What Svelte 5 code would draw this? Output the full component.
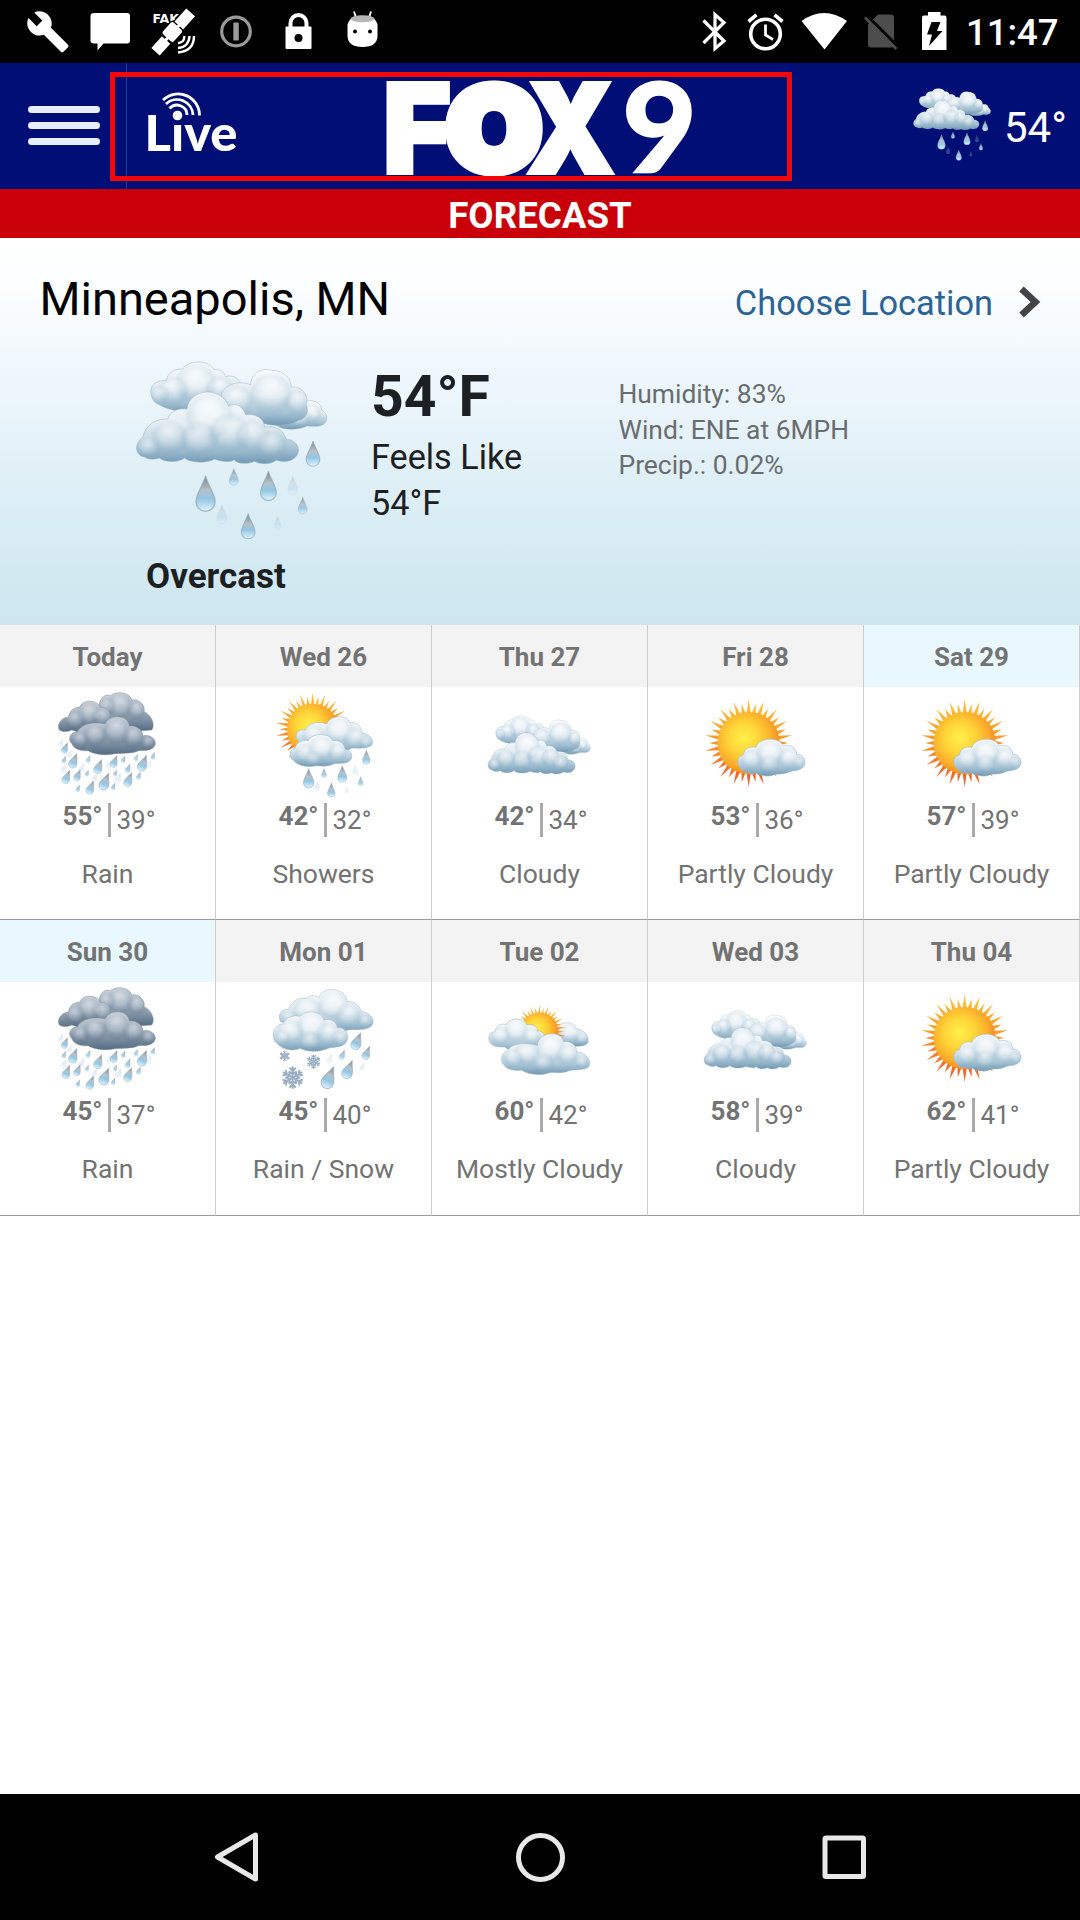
<script>
  const days = [
    { name: 'Today', icon: 'rain', high: 55, low: 39, text: 'Rain' },
    { name: 'Wed 26', icon: 'showers', high: 42, low: 32, text: 'Showers' },
    { name: 'Thu 27', icon: 'cloudy', high: 42, low: 34, text: 'Cloudy' },
    { name: 'Fri 28', icon: 'partly', high: 53, low: 36, text: 'Partly Cloudy' },
    { name: 'Sat 29', icon: 'partly', high: 57, low: 39, text: 'Partly Cloudy', weekend: true },
    { name: 'Sun 30', icon: 'rain', high: 45, low: 37, text: 'Rain', weekend: true },
    { name: 'Mon 01', icon: 'snow', high: 45, low: 40, text: 'Rain / Snow' },
    { name: 'Tue 02', icon: 'mostly', high: 60, low: 42, text: 'Mostly Cloudy' },
    { name: 'Wed 03', icon: 'cloudy', high: 58, low: 39, text: 'Cloudy' },
    { name: 'Thu 04', icon: 'partly', high: 62, low: 41, text: 'Partly Cloudy' }
  ];

  const boxes = {
    rain: '162 207 324 324',
    showers: '810 207 324 324',
    cloudy: '168 207 324 324',
    partly: '818 207 324 324',
    snow: '810 207 324 324',
    mostly: '168 207 324 324'
  };

  // Spiky ring of rays round a sun disc; long and short rays alternate.
  function rays(cx, cy, r, outer, n = 36) {
    let d = '';
    const step = (Math.PI * 2) / n;
    for (let i = 0; i < n; i++) {
      const a = i * step - Math.PI / 2;
      const len = i % 2 ? r + (outer - r) * 0.66 : outer;
      const p = (ang, rad) => `${(cx + Math.cos(ang) * rad).toFixed(1)},${(cy + Math.sin(ang) * rad).toFixed(1)}`;
      d += `M${p(a - step * 0.42, r - 4)}L${p(a, len)}L${p(a + step * 0.42, r - 4)}Z`;
    }
    return d;
  }

  // [x, y, height, opacity]
  const overcastDrops = [
    [258, 432, 106, 1], [343, 382, 50, 0.9], [447, 409, 88, 1], [581, 312, 76, 1],
    [386, 530, 76, 1], [550, 468, 50, 0.9], [520, 407, 54, 0.28], [307, 494, 56, 0.28], [475, 519, 36, 0.28]
  ];
  const showerDrops = [
    [926, 475, 58, 1], [972, 459, 28, 0.9], [1027, 462, 50, 1], [1099, 412, 42, 1],
    [994, 510, 42, 1], [1082, 484, 28, 0.9], [1066, 451, 30, 0.25], [952, 498, 30, 0.25], [1041, 511, 20, 0.25]
  ];
  const rainDrops = [
    [196, 384, 34, 1], [222, 422, 46, 1], [193, 419, 22, 0.9], [266, 417, 24, 0.8], [297, 439, 44, 1],
    [344, 424, 38, 1], [371, 418, 22, 0.9], [409, 413, 22, 0.8], [430, 429, 50, 1], [460, 408, 22, 0.9],
    [201, 470, 42, 1], [234, 465, 36, 1], [262, 459, 20, 0.9], [316, 484, 54, 1], [347, 459, 20, 0.9],
    [385, 445, 28, 0.9], [387, 478, 44, 1], [417, 467, 24, 0.9], [235, 505, 22, 0.9], [273, 502, 42, 1],
    [341, 499, 22, 0.9], [184, 368, 26, 0.25], [193, 445, 30, 0.25], [246, 443, 30, 0.25],
    [356, 474, 34, 0.25], [327, 434, 26, 0.25], [448, 432, 28, 0.2], [210, 402, 26, 0.25], [285, 472, 28, 0.25]
  ];
  const snowDrops = [
    [1072, 378, 54, 1], [1101, 413, 42, 1], [1028, 419, 30, 0.9], [1046, 463, 58, 1], [988, 487, 70, 1],
    [990, 431, 30, 0.25], [1088, 455, 26, 0.25]
  ];
</script>

{#snippet cloud(id, d, puffs, dark = false)}
  <clipPath {id}><path {d} /></clipPath>
  <path {d} fill={dark ? 'url(#g-dark)' : 'url(#g-cloud)'} />
  <g clip-path="url(#{id})">
    <g class="soft">
      {#each puffs as [x, y, r]}
        <circle cx={x} cy={y + r * 0.2} r={r * 1.1} fill={dark ? 'url(#g-shade-dark)' : 'url(#g-shade)'} />
        <circle cx={x - r * 0.05} cy={y - r * 0.2} r={r} fill={dark ? 'url(#g-puff-dark)' : 'url(#g-puff)'} />
      {/each}
    </g>
  </g>
  <path {d} fill="none" stroke={dark ? '#7c8d9e' : '#9bb3c5'} stroke-width="3" stroke-opacity=".5" />
{/snippet}

{#snippet drops(list, angle = 0)}
  {#each list as [x, y, h, o]}
    <path
      d="M0,-50 C5,-27 27,0 27,23 A27,27 0 0 1 -27,23 C-27,0 -5,-27 0,-50Z"
      transform="translate({x} {y}) rotate({angle}) scale({h / 100})"
      fill="url(#g-drop)" stroke="#8fa6b7" stroke-opacity=".7" stroke-width="4" opacity={o}
    />
  {/each}
{/snippet}

{#snippet sun(x, y, r, outer)}
  <path d={rays(x, y, r, outer)} fill="url(#g-ray)" />
  <circle cx={x} cy={y} r={r} fill="url(#g-sun)" />
{/snippet}

{#snippet flake(x, y, s)}
  <g transform="translate({x} {y}) scale({s})" stroke="#9aaec3" stroke-width="6" stroke-linecap="round" fill="none">
    {#each [0, 60, 120, 180, 240, 300] as a}
      <path d="M0,0V-31M-8,-28L0,-20L8,-28M-9,-17L0,-10L9,-17" transform="rotate({a})" />
    {/each}
  </g>
{/snippet}

<svg class="sprite" aria-hidden="true">
  <defs>
    <linearGradient id="g-cloud" x1="0" y1="0" x2="0" y2="1">
      <stop offset="0" stop-color="#fdfeff" /><stop offset=".45" stop-color="#e4edf3" />
      <stop offset=".75" stop-color="#adc8d8" /><stop offset="1" stop-color="#7098b3" />
    </linearGradient>
    <linearGradient id="g-dark" x1="0" y1="0" x2="0" y2="1">
      <stop offset="0" stop-color="#d0d6df" /><stop offset=".5" stop-color="#9dacbc" />
      <stop offset="1" stop-color="#526a80" />
    </linearGradient>
    <radialGradient id="g-puff">
      <stop offset="0" stop-color="#fff" stop-opacity=".55" /><stop offset=".5" stop-color="#fff" stop-opacity=".26" />
      <stop offset="1" stop-color="#fff" stop-opacity="0" />
    </radialGradient>
    <radialGradient id="g-puff-dark">
      <stop offset="0" stop-color="#edf0f5" stop-opacity=".5" /><stop offset="1" stop-color="#d8e0ea" stop-opacity="0" />
    </radialGradient>
    <radialGradient id="g-shade">
      <stop offset=".4" stop-color="#86adc4" stop-opacity="0" /><stop offset=".82" stop-color="#86adc4" stop-opacity=".22" />
      <stop offset="1" stop-color="#86adc4" stop-opacity="0" />
    </radialGradient>
    <radialGradient id="g-shade-dark">
      <stop offset=".4" stop-color="#4f667b" stop-opacity="0" /><stop offset=".82" stop-color="#4f667b" stop-opacity=".2" />
      <stop offset="1" stop-color="#4f667b" stop-opacity="0" />
    </radialGradient>
    <linearGradient id="g-drop" x1="0" y1="0" x2="0" y2="1">
      <stop offset="0" stop-color="#7f8489" /><stop offset=".4" stop-color="#b6c1c9" />
      <stop offset=".65" stop-color="#93c6e4" /><stop offset="1" stop-color="#e2f5fd" />
    </linearGradient>
    <radialGradient id="g-sun" cx=".42" cy=".42" r=".62">
      <stop offset="0" stop-color="#fff04c" /><stop offset=".4" stop-color="#fed538" />
      <stop offset=".75" stop-color="#fbab2b" /><stop offset="1" stop-color="#f28421" />
    </radialGradient>
    <linearGradient id="g-ray" x1="0" y1="0" x2="0" y2="1">
      <stop offset="0" stop-color="#fbc83c" /><stop offset=".5" stop-color="#f7942a" /><stop offset="1" stop-color="#ee5a28" />
    </linearGradient>

    <g id="clouds">
      {@render cloud('c1', 'M120,165 C92,158 82,110 110,98 C125,90 140,92 140,92 C145,65 170,55 190,58 C205,30 265,28 284,60 C300,55 315,70 318,80 C340,75 355,85 362,97 L330,190 L250,192 C220,195 180,190 160,180 C145,178 130,172 120,165Z', [[230, 90, 60], [160, 115, 45], [118, 130, 30], [300, 110, 40]])}
      {@render cloud('c2', 'M555,155 C590,146 608,165 606,180 C626,190 628,215 610,225 C590,235 570,226 560,230 C540,240 500,242 480,232 L430,200 L500,150Z', [[575, 185, 30], [540, 200, 35]])}
      {@render cloud('c3', 'M306,130 C320,100 365,92 393,105 C398,60 435,55 460,62 C495,62 517,90 515,112 C550,108 570,140 560,165 C572,190 555,210 535,212 C510,232 440,230 420,215 L300,200Z', [[455, 120, 62], [350, 145, 50], [535, 150, 38]])}
      {@render cloud('c4', 'M75,322 C45,318 42,280 70,262 C75,225 115,205 145,208 C150,180 185,175 202,178 C210,115 305,108 328,170 C350,155 375,175 378,195 C405,190 435,205 435,232 C470,225 495,245 500,268 C535,270 550,305 525,325 C510,340 480,335 470,332 C455,345 420,345 405,335 C385,345 350,342 345,330 C330,340 300,335 285,328 C265,342 210,340 195,325 C180,338 135,340 120,325 C105,330 85,330 75,322Z', [[270, 185, 70], [150, 255, 52], [240, 260, 55], [330, 240, 60], [400, 250, 50], [85, 290, 36], [455, 280, 46]])}
    </g>

    <g id="overcast">
      <use href="#clouds" />
      {@render drops(overcastDrops)}
    </g>

    <g id="cloudy"><use href="#clouds" transform="translate(147 266) scale(.537 .573)" /></g>

    <g id="rain">
      {@render cloud('r1', 'M298,250 C305,225 325,222 330,228 C345,212 390,215 395,240 C420,235 437,260 432,275 C455,285 467,315 455,330 L400,334 L300,290Z', [[360, 250, 38], [410, 265, 28], [320, 255, 26]], true)}
      {@render cloud('r2', 'M178,330 C168,310 190,290 205,292 C210,268 225,262 238,262 C250,235 295,240 300,262 C325,260 335,280 330,295 L300,335 C270,345 230,335 215,330 C200,337 185,335 178,330Z', [[268, 275, 36], [225, 295, 30], [305, 285, 28]], true)}
      {@render cloud('r3', 'M215,370 C200,355 215,335 232,335 C245,308 290,305 315,312 C330,280 385,285 388,318 C415,315 430,335 428,348 C455,340 475,365 462,380 C450,395 425,390 415,392 C395,403 350,398 340,402 C310,408 275,400 265,392 C240,395 220,385 215,370Z', [[350, 325, 40], [285, 340, 34], [400, 345, 32], [240, 355, 26], [445, 365, 22]], true)}
      {@render drops(rainDrops, 22)}
    </g>

    <g id="showers">
      {@render sun(938, 328, 77, 111)}
      {@render cloud('s1', 'M893,362 C880,345 895,325 915,330 C925,308 955,302 980,312 C990,285 1040,282 1050,308 C1070,305 1085,320 1086,340 C1105,338 1125,360 1115,376 C1100,388 1070,384 1055,384 L1030,400 L900,375Z', [[1018, 325, 42], [940, 340, 32], [1065, 350, 34], [1098, 365, 20]])}
      {@render cloud('s2', 'M880,420 C865,412 868,385 885,385 C890,365 910,358 925,362 C935,338 990,338 998,362 C1022,358 1035,375 1035,388 C1055,388 1062,412 1048,424 C1030,434 1010,428 1000,432 C980,443 960,436 945,438 C915,443 890,435 880,420Z', [[965, 378, 38], [915, 398, 30], [1012, 392, 28], [940, 415, 26]])}
      {@render drops(showerDrops)}
    </g>

    <g id="partly">
      {@render sun(958, 369, 93, 132)}
      {@render cloud('p1', 'M935,446 C920,435 922,408 942,405 C945,385 962,378 980,382 C990,350 1052,350 1062,378 C1085,370 1102,385 1102,402 C1125,402 1135,430 1120,443 C1105,455 1085,450 1075,458 C1055,464 1045,460 1035,464 C1015,472 990,466 980,460 C960,462 940,456 935,446Z', [[1022, 392, 40], [965, 415, 32], [1080, 410, 34], [1020, 430, 30], [1108, 425, 18]])}
    </g>

    <g id="mostly">
      {@render cloud('m1', 'M385,335 C400,318 430,318 440,342 C460,342 475,360 475,380 C470,395 440,395 420,392 L380,380Z', [[420, 350, 30], [455, 368, 20]])}
      {@render sun(328, 350, 57, 80)}
      {@render cloud('m2', 'M185,388 C170,375 175,350 195,350 C198,330 215,325 228,328 C240,305 285,308 290,330 C315,325 325,340 322,348 C340,345 348,365 345,385 L300,412 C260,408 235,408 225,396 C210,396 192,396 185,388Z', [[258, 338, 34], [212, 358, 28], [305, 358, 26]])}
      {@render cloud('m3', 'M222,450 C208,438 215,410 232,408 C240,385 290,380 322,392 C325,348 395,345 400,380 C425,375 442,395 440,412 C465,408 490,440 475,456 C460,468 430,462 415,468 C390,478 370,470 355,474 C325,484 290,476 275,466 C250,468 228,462 222,450Z', [[362, 392, 42], [290, 410, 36], [412, 412, 32], [250, 425, 28], [340, 440, 30], [455, 438, 20]])}
    </g>

    <g id="snow">
      {@render cloud('w1', 'M842,320 C832,300 842,283 866,283 C875,258 900,245 920,250 C930,240 945,240 957,248 C968,212 1035,215 1042,260 C1065,258 1082,275 1082,290 C1105,288 1130,315 1115,332 C1100,348 1060,342 1045,345 L990,355Z', [[1000, 260, 44], [920, 280, 42], [1045, 295, 38], [865, 305, 24], [1095, 315, 22]])}
      {@render cloud('w2', 'M832,386 C812,372 815,330 850,326 C855,305 885,300 900,304 C918,282 965,288 972,315 C995,308 1012,325 1012,338 C1040,335 1052,370 1035,386 C1020,400 990,394 980,402 C950,413 920,410 900,400 C875,412 845,400 832,386Z', [[935, 325, 44], [870, 345, 40], [985, 350, 36], [930, 375, 32], [1020, 365, 24], [845, 365, 26]])}
      {@render flake(878, 488, 1)}
      {@render flake(941, 440, 0.64)}
      {@render flake(854, 423, 0.48)}
      {@render drops(snowDrops, 22)}
    </g>
  </defs>
</svg>

<div class="screen">
  <div class="status">
    <svg class="s48" viewBox="23 0 48 63"><path transform="translate(25.5 9.3) scale(1.87)" fill="#fff" d="M22.7 19l-9.1-9.1c.9-2.3.4-5-1.5-6.9-2-2-5-2.4-7.4-1.3L9 6 6 9 1.6 4.7C.4 7.1.9 10.1 2.9 12.1c1.9 1.9 4.6 2.4 6.9 1.5l9.1 9.1c.4.4 1 .4 1.4 0l2.3-2.3c.5-.4.5-1.1.1-1.4z" /></svg>
    <svg class="s48" viewBox="86 0 48 63"><path fill="#fff" d="M94,13h33q3,0 3,3v24.500q0,3 -3,3h-23.500l-6,7v-7h-3.500q-3.500,0 -3.500,-3v-24.500q0,-3 3.500,-3z" /></svg>
    <svg class="s48" viewBox="149 0 48 63">
      <text x="152.500" y="22.500" class="fake">FAKE</text>
      <g transform="translate(173 32) rotate(-48)" fill="#fff" stroke="#000" stroke-width="1.200">
        <rect x="-27" y="-6" width="17" height="12.500" /><rect x="8" y="-6.500" width="19" height="13" />
        <rect x="-9" y="-8.500" width="17" height="16" rx="3" /><path d="M-11,0h3M7,0h3" stroke="#fff" stroke-width="3" />
      </g>
      <g fill="none" stroke="#fff" stroke-width="2.400"><path d="M178,43Q184,43 184.500,36" /><path d="M178,48Q189,47 189.500,36" /><path d="M178,52.500Q194,51 194,36" /></g>
    </svg>
    <svg class="s48" viewBox="212 0 48 63"><circle cx="236" cy="31.500" r="14.300" fill="none" stroke="#9a9a9a" stroke-width="3.200" /><rect x="233.300" y="22.500" width="5.500" height="18" rx="1" fill="#9a9a9a" /></svg>
    <svg class="s48" viewBox="275 0 48 63"><path d="M290.500,28v-5a8,8 0 0 1 16,0v5" fill="none" stroke="#fff" stroke-width="4" /><rect x="285.500" y="26.500" width="26" height="22.500" rx="1" fill="#fff" /><circle cx="298.500" cy="38" r="4" fill="#000" /></svg>
    <svg class="s48" viewBox="338 0 48 63"><path d="M356,18l-2,-6.500M369,18l2,-6.500" stroke="#fff" stroke-width="1.800" /><path fill="#fff" d="M347.500,25q1,-5 5,-7.500h20q4,2.500 5,7.500v11q-.5,11 -15,11t-15,-11z" /><ellipse cx="362.500" cy="18.800" rx="12" ry="3.500" fill="#b5b5b5" /><circle cx="355" cy="31.500" r="2" /><circle cx="370" cy="31.500" r="2" /></svg>
    <div class="grow"></div>
    <svg class="s48" viewBox="690 0 48 63"><path d="M703.500,20.500L724,41 715,48.500V14.500L724,22.500 703.500,43" fill="none" stroke="#fff" stroke-width="3.200" /></svg>
    <svg class="s56" viewBox="738 0 56 63"><g fill="none" stroke="#fff" stroke-width="3.600"><circle cx="765.500" cy="34" r="14.800" /><path d="M748.500,21.500l8,-6.700M782.500,21.500l-8,-6.700" /><path d="M765.500,24.500v10.500l7.500,4.500" stroke-width="2.800" /></g></svg>
    <svg class="s60" viewBox="794 0 60 63"><path fill="#fff" d="M801.500,21Q824,5 847,21L824.500,49.500Z" /></svg>
    <svg class="s54" viewBox="854 0 54 63"><path d="M878,14.500h13q3,0 3,3v27q0,3 -3,3h-20q-3,0 -3,-3v-20z" fill="#4d4d4d" /><path d="M867,17L898,48" stroke="#000" stroke-width="5" /><path d="M865,17.500L896.500,49" stroke="#4d4d4d" stroke-width="2.800" /></svg>
    <svg class="s52" viewBox="908 0 52 63"><path fill="#fff" d="M928,12h12.500v3.500h4q2,0 2,2v32.500h-24.500v-32.500q0,-2 2,-2h4z" /><path d="M931.500,22h9l-3.500,9h5.500l-13.500,15 3,-11.500h-5z" fill="#000" /></svg>
    <span class="clock">11:47</span>
  </div>

  <header class="bar">
    <div class="menu"><i></i><i></i><i></i></div>
    <svg class="live" viewBox="127 63 200 126">
      <g fill="none" stroke="#fff" stroke-linecap="butt">
        <path d="M169.500,108.500A10,10 0 0 1 187,115" stroke-width="2.800" />
        <path d="M166,104A16,16 0 0 1 193,115" stroke-width="2.800" />
        <path d="M163,100A21.500,21.500 0 0 1 199.500,115.500" stroke-width="2.800" />
      </g>
      <circle cx="177.500" cy="115.500" r="4.800" fill="#fff" />
      <text x="144.500" y="151" class="livetext" textLength="93" lengthAdjust="spacingAndGlyphs">Lıve</text>
    </svg>
    <svg class="logo" viewBox="380 63 330 126">
      <text y="172.500" class="fox"><tspan x="383" textLength="68" lengthAdjust="spacingAndGlyphs">F</tspan><tspan x="447" y="170" class="o" textLength="94" lengthAdjust="spacingAndGlyphs">O</tspan><tspan x="526.500" y="172.500" textLength="88" lengthAdjust="spacingAndGlyphs">X</tspan></text>
      <text x="622" y="173" class="nine" textLength="75" lengthAdjust="spacingAndGlyphs">9</text>
    </svg>
    <div class="grow"></div>
    <svg class="mini" viewBox="40 25 592 555"><use href="#overcast" /></svg>
    <span class="now">54°</span>
    <div class="highlight"></div>
  </header>

  <div class="banner">FORECAST</div>

  <section class="current">
    <div class="place">
      <span class="city">Minneapolis, MN</span>
      <span class="choose">Choose Location</span>
      <svg class="chevron" viewBox="0 0 22 32"><path d="M2.500,3L16.500,16 2.500,29" fill="none" stroke="#444" stroke-width="6.500" /></svg>
    </div>
    <div class="conditions">
      <div class="sky">
        <svg class="big" viewBox="40 25 592 555"><use href="#overcast" /></svg>
        <div class="summary">Overcast</div>
      </div>
      <div class="temp">
        <div class="deg">54°F</div>
        <div class="feels">Feels Like<br />54°F</div>
      </div>
      <div class="facts">Humidity: 83%<br />Wind: ENE at 6MPH<br />Precip.: 0.02%</div>
    </div>
  </section>

  <section class="days">
    {#each days as day}
      <article>
        <h3 class:weekend={day.weekend}>{day.name}</h3>
        <svg class="icon" viewBox={boxes[day.icon]}><use href="#{day.icon}" /></svg>
        <div class="range"><b>{day.high}°</b><i></i><span>{day.low}°</span></div>
        <p>{day.text}</p>
      </article>
    {/each}
  </section>

  <div class="grow"></div>

  <nav>
    <svg viewBox="0 0 60 60"><path d="M49.500,8V52L11.500,30Z" /></svg>
    <svg viewBox="0 0 60 60"><circle cx="30.500" cy="30.500" r="22" /></svg>
    <svg viewBox="0 0 60 60"><rect x="11" y="11" width="38.500" height="38.500" rx="1" /></svg>
  </nav>
</div>

<style>
  :global(body) { margin: 0; background: #fff; }
  .sprite { position: absolute; width: 0; height: 0; }
  .soft { filter: blur(3px); }
  .screen { width: 1080px; height: 1920px; display: flex; flex-direction: column; overflow: hidden; background: #fff; font-family: Roboto, sans-serif; }
  .screen svg { display: block; flex: none; }
  .grow { flex: 1; }

  .status { height: 63px; background: #000; display: flex; padding-left: 23px; box-sizing: border-box; flex: none; }
  .s48 { width: 48px; height: 63px; margin-right: 15px; }
  .grow ~ .s48 { margin-right: 0; }
  .s56 { width: 56px; height: 63px; }
  .s60 { width: 60px; height: 63px; }
  .s54 { width: 54px; height: 63px; }
  .s52 { width: 52px; height: 63px; }
  .clock { width: 120px; padding-left: 6px; box-sizing: border-box; color: #fff; font-size: 36.500px; font-weight: 500; line-height: 66px; }
  .fake { font: bold 12.500px 'DejaVu Sans', sans-serif; fill: #fff; }

  .bar { position: relative; height: 126px; flex: none; background: #000e75; display: flex; align-items: center; }
  .menu { width: 127px; height: 126px; border-right: 1px solid #2c3a8c; padding: 43px 26px 0 27.500px; box-sizing: border-box; display: flex; flex-direction: column; gap: 9px; }
  .menu i { height: 7px; border-radius: 4px; background: #e8eefc; }
  .live { width: 200px; height: 126px; }
  .livetext { font: 900 50px Lato, sans-serif; fill: #fff; }
  .logo { width: 330px; height: 126px; margin-left: 53px; overflow: visible; }
  .fox { font: 900 124px Inter, sans-serif; fill: #fff; stroke: #fff; stroke-width: 4px; }
  .o { font-size: 114px; stroke-width: 11px; }
  .nine { font: 900 123px Lato, sans-serif; fill: #fff; stroke: #fff; stroke-width: 1.500px; }
  .mini { width: 80px; height: 75px; margin: -3px 0 0; }
  .now { width: 76px; margin-left: 12px; color: #fff; font-size: 42px; line-height: 60px; padding-top: 4px; }
  .highlight { position: absolute; left: 110px; top: 9px; width: 682px; height: 109px; box-sizing: border-box; border: 5px solid #f60606; }

  .banner { height: 49px; flex: none; background: #c90009; color: #fff; text-align: center; font-size: 36.700px; font-weight: 700; line-height: 54px; }

  .current { height: 387px; flex: none; box-sizing: border-box; padding-top: 30px; background: linear-gradient(#fff 0, #fdfeff 10%, #edf6fc 38%, #d8ecf4 75%, #cde6f0 100%); }
  .place { display: flex; align-items: baseline; padding: 0 39px 0 39.500px; line-height: 62px; height: 62px; }
  .city { flex: 1; font-size: 47px; color: #000; }
  .choose { font-size: 34.400px; color: #2a6496; margin-right: 26px; }
  .chevron { width: 22px; height: 32px; align-self: flex-start; margin-top: 18px; }
  .conditions { display: grid; grid-template-columns: 238px 247.500px 1fr; padding-left: 133px; }
  .sky { padding-top: 28px; }
  .big { width: 197px; height: 185px; }
  .summary { margin: 14px 0 0 13px; font-size: 35px; line-height: 40px; font-weight: 700; color: #1c2022; }
  .temp { padding-top: 35px; color: #1c2022; }
  .deg { font-size: 57px; line-height: 64px; font-weight: 700; }
  .feels { margin-top: 5px; font-size: 34.200px; line-height: 46px; }
  .facts { padding-top: 47px; font-size: 26.400px; line-height: 35.500px; color: #696d70; }

  .days { display: grid; grid-template-columns: repeat(5, 216px); grid-template-rows: 295px 296px; flex: none; }
  article { box-sizing: border-box; border-right: 1px solid #cdcdcd; border-bottom: 1px solid #9a9a9a; color: #737373; font-size: 26px; text-align: center; }
  h3 { margin: 0; height: 62px; box-sizing: border-box; padding-top: 2px; line-height: 61px; font-size: 26px; font-weight: 700; background: #f3f3f3; }
  .weekend { background: #e9f8fe; }
  .icon { width: 108px; height: 108px; margin: 2px 0 0 54px; }
  .range { display: grid; grid-template-columns: 108px 3px 1fr; height: 31px; margin-top: 6px; }
  .range b { text-align: right; padding-right: 5.500px; line-height: 26px; }
  .range i { background: #aaa; }
  .range span { text-align: left; padding-left: 5.500px; line-height: 34px; }
  p { margin: 22px 0 0; font-size: 26.500px; line-height: 36px; }

  nav { height: 126px; flex: none; background: #000; display: grid; grid-template-columns: repeat(3, 304px); justify-content: center; justify-items: center; align-items: center; }
  nav svg { width: 60px; height: 60px; fill: none; stroke: #e8e8e8; stroke-width: 5; stroke-linejoin: round; }
</style>
